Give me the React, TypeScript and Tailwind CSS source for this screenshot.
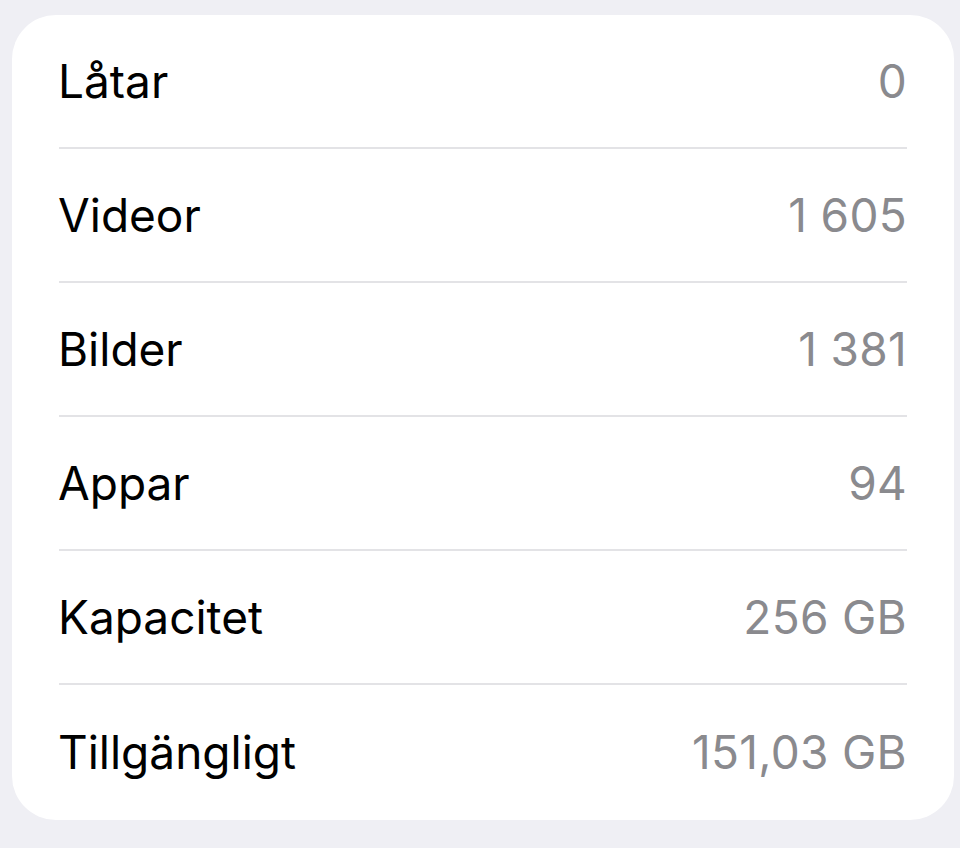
import React from "react";

const rows = [
  { label: "Låtar", value: "0" },
  { label: "Videor", value: "1 605" },
  { label: "Bilder", value: "1 381" },
  { label: "Appar", value: "94" },
  { label: "Kapacitet", value: "256 GB" },
  { label: "Tillgängligt", value: "151,03 GB" },
];

export default function App() {
  return (
    <div className="w-[960px] h-[848px] bg-[#efeff4] pt-[15px] pl-[12px] pr-[6px] font-['Inter',sans-serif]">
      <div className="bg-white rounded-[44px] pl-[47px] pr-[47px]">
        {rows.map((row, i) => (
          <div
            key={row.label}
            className={
              i < rows.length - 1
                ? "flex items-center justify-between h-[134px] border-b-2 border-[#e3e3e6]"
                : "flex items-center justify-between h-[135px]"
            }
          >
            <span className="text-[46px] -ml-px text-black">{row.label}</span>
            <span className="text-[46px] tracking-[0.3px] text-[#8a8a8e]">{row.value}</span>
          </div>
        ))}
      </div>
    </div>
  );
}
